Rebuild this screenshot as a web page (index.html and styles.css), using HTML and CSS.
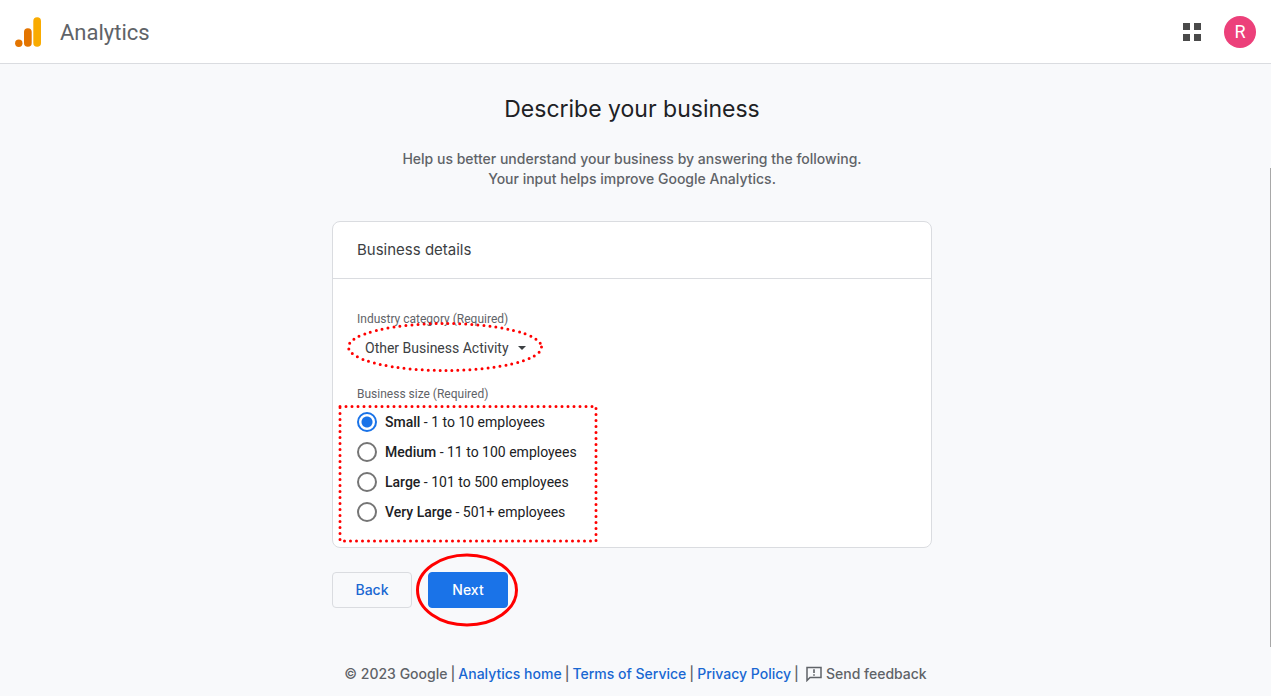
FILE: index.html
```html
<!DOCTYPE html>
<html lang="en">
<head>
<meta charset="utf-8">
<title>Analytics</title>
<link rel="stylesheet" href="styles.css">
</head>
<body>
<header class="topbar">
  <svg class="logo" width="28" height="32" viewBox="0 0 28 32" aria-hidden="true">
    <rect x="19.3" y="1.2" width="7.7" height="29.5" rx="3.8" fill="#f9ab00"/>
    <rect x="10" y="12.2" width="7.7" height="18.5" rx="3.8" fill="#e37400"/>
    <circle cx="4.8" cy="27.2" r="3.7" fill="#e37400"/>
  </svg>
  <span class="brand">Analytics</span>
  <button class="apps" aria-label="Apps">
    <svg width="18" height="18" viewBox="0 0 18 18" fill="#4a4a4a"><path d="M0 0h7v7H0zM11 0h7v7h-7zM0 11h7v7H0zM11 11h7v7h-7z"/></svg>
  </button>
  <button class="avatar" aria-label="Account">R</button>
</header>
<main class="content">
  <h1 class="title">Describe your business</h1>
  <p class="intro">Help us better understand your business by answering the following.<br>Your input helps improve Google Analytics.</p>
  <form class="form">
    <section class="card">
      <h2 class="card-title">Business details</h2>
      <div class="card-body">
        <label class="label" for="industry">Industry category (Required)</label>
        <div class="picker">
          <select class="select" id="industry"><option>Other Business Activity</option></select>
          <svg class="caret" width="8" height="4" viewBox="0 0 8 4" aria-hidden="true"><path d="M0 0h8L4 4z" fill="#3c4043"/></svg>
          <svg class="mark mark-picker" width="200" height="52" viewBox="0 0 200 52" aria-hidden="true"><ellipse cx="100" cy="25" rx="96.5" ry="23.5" class="dots"/></svg>
        </div>
        <fieldset class="sizes">
          <legend class="label">Business size (Required)</legend>
          <div class="options">
            <label class="option"><input class="radio" type="radio" name="size" checked><span><b>Small</b> - 1 to 10 employees</span></label>
            <label class="option"><input class="radio" type="radio" name="size"><span><b>Medium</b> - 11 to 100 employees</span></label>
            <label class="option"><input class="radio" type="radio" name="size"><span><b>Large</b> - 101 to 500 employees</span></label>
            <label class="option"><input class="radio" type="radio" name="size"><span><b>Very Large</b> - 501+ employees</span></label>
            <svg class="mark mark-sizes" width="260" height="140" viewBox="0 0 260 140" aria-hidden="true"><path d="M2 2.5H258V137H2z" class="dots"/></svg>
          </div>
        </fieldset>
      </div>
    </section>
    <div class="actions">
      <button class="button" type="button">Back</button>
      <div class="next">
        <button class="button primary" type="button">Next</button>
        <svg class="mark mark-next" width="104" height="76" viewBox="0 0 104 76" aria-hidden="true"><ellipse cx="51" cy="38" rx="49.5" ry="35" fill="none" stroke="#ff0000" stroke-width="3"/></svg>
      </div>
    </div>
  </form>
</main>
<footer class="footer">
  <span>© 2023 Google</span>
  <span>|</span>
  <a href="#">Analytics home</a>
  <span>|</span>
  <a href="#">Terms of Service</a>
  <span>|</span>
  <a href="#">Privacy Policy</a>
  <span>|</span>
  <button class="feedback">
    <svg width="16" height="16" viewBox="0 0 16 16" aria-hidden="true"><path d="M1 14.5V1.5H15V11.5H4z" fill="none" stroke="#5f6368" stroke-width="1.5"/><path d="M7.2 3.2h1.6v3.8H7.2zM7.2 8.2h1.6v1.6H7.2z" fill="#5f6368"/></svg>
    Send feedback
  </button>
</footer>
<div class="scroll" aria-hidden="true"></div>
</body>
</html>
```
FILE: styles.css
```css
* { box-sizing: border-box; }
body {
  margin: 0;
  min-height: 100vh;
  background: #f8f9fb;
  color: #202124;
  font-family: Roboto, sans-serif;
  font-size: 14px;
  line-height: 20px;
}
button { border: 0; padding: 0; background: none; font: inherit; cursor: pointer; }
.topbar {
  display: flex;
  align-items: center;
  height: 64px;
  padding: 0 15px 0 14px;
  background: #fff;
  border-bottom: 1px solid #dadce0;
}
.brand { margin-left: 18px; padding-top: 2px; font: 22px/28px Roboto, sans-serif; color: #5f6368; }
.apps { display: flex; margin-left: auto; }
.avatar {
  width: 32px;
  height: 32px;
  margin-left: 23px;
  border-radius: 50%;
  background: #ec407a;
  color: #fff;
  font-size: 18px;
}
.content { padding: 29px 7px 0 0; }
.title { margin: 0; text-align: center; font: 400 23px/32px Inter, sans-serif; }
.intro {
  margin: 24px 0 32px;
  text-align: center;
  font-family: Inter, sans-serif;
  font-weight: 500;
  color: #5f6368;
}
.form { max-width: 600px; margin: 0 auto; }
.card { background: #fff; border: 1px solid #dadce0; border-radius: 8px; }
.card-title {
  margin: 0;
  padding: 16px 24px;
  border-bottom: 1px solid #dadce0;
  font: 400 15px/24px Inter, sans-serif;
  color: #3c4043;
}
.card-body { padding: 32px 24px 15px; }
.label { display: block; padding: 0; font-size: 12px; line-height: 16px; color: #5f6368; }
.picker { position: relative; display: inline-flex; align-items: center; height: 36px; margin: 3px 0 20px; padding: 0 8px; }
.select { appearance: none; border: 0; padding: 0; background: none; font: 14px/20px Roboto, sans-serif; color: #3c4043; }
.caret { margin-left: 9px; }
.sizes { margin: 0; padding: 0; border: 0; }
.options { position: relative; display: flex; flex-direction: column; gap: 10px; width: fit-content; padding: 10px 0; }
.option { display: flex; align-items: center; gap: 8px; }
.option b { font-weight: 500; }
.radio {
  appearance: none;
  width: 20px;
  height: 20px;
  margin: 0;
  border: 2px solid #757575;
  border-radius: 50%;
}
.radio:checked { border-color: #1a73e8; background: radial-gradient(circle, #1a73e8 5px, #fff 6px); }
.mark { position: absolute; pointer-events: none; }
.mark-picker { left: -12px; top: calc(50% - 26px); }
.mark-sizes { left: -19px; top: 2px; }
.mark-next { left: calc(50% - 52px); top: calc(50% - 38px); }
.dots { fill: none; stroke: #ff0000; stroke-width: 3; stroke-linecap: round; stroke-dasharray: 0 6; }
.actions { display: flex; gap: 16px; margin-top: 24px; }
.next { position: relative; }
.button {
  width: 80px;
  height: 36px;
  border: 1px solid #dadce0;
  border-radius: 4px;
  font: 500 14px/20px Inter, sans-serif;
  color: #1967d2;
}
.primary { border-color: #1a73e8; background: #1a73e8; color: #fff; }
.footer {
  display: flex;
  justify-content: center;
  align-items: center;
  gap: 3px;
  margin-top: 56px;
  font-family: Inter, sans-serif;
  font-weight: 500;
  color: #5f6368;
}
.footer a { color: #1967d2; text-decoration: none; }
.feedback { display: flex; align-items: center; gap: 4px; margin-left: 4px; color: inherit; }
.scroll { position: fixed; right: 0; top: 168px; width: 1px; height: 479px; background: #a8a8a8; }
```
